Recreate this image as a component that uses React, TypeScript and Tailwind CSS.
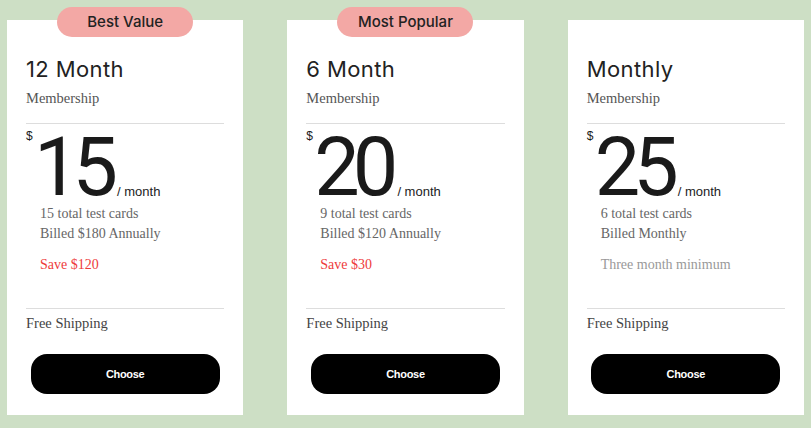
import React from "react";

type Plan = {
  badge?: string;
  title: string;
  price: string;
  cards: string;
  billed: string;
  note: string;
  noteRed: boolean;
};

const plans: Plan[] = [
  { badge: "Best Value", title: "12 Month", price: "15", cards: "15 total test cards", billed: "Billed $180 Annually", note: "Save $120", noteRed: true },
  { badge: "Most Popular", title: "6 Month", price: "20", cards: "9 total test cards", billed: "Billed $120 Annually", note: "Save $30", noteRed: true },
  { title: "Monthly", price: "25", cards: "6 total test cards", billed: "Billed Monthly", note: "Three month minimum", noteRed: false },
];

const serif = { fontFamily: "'Liberation Serif', 'Times New Roman', serif" };

function Card({ p }: { p: Plan }) {
  return (
    <div className="relative flex-1 h-[395px] bg-white px-[19px] pt-[35px] pb-[21px] flex flex-col">
      {p.badge && (
        <div className="absolute left-1/2 -translate-x-1/2 top-[-13px] w-[136px] h-[30px] rounded-full bg-[#f3a8a5] flex items-center justify-center text-[15px] font-medium text-[#222] font-[Inter,sans-serif]">
          {p.badge}
        </div>
      )}
      <div className="text-[22px] leading-[28px] text-[#222] tracking-[0.4px] font-[Inter,sans-serif]">{p.title}</div>
      <div className="mt-[5px] text-[14.5px] leading-[20px] text-[#555]" style={serif}>Membership</div>
      <div className="mt-[15px] h-px bg-[#dddddd]" />
      <div className="mt-[8px] flex items-baseline text-[#1a1a1a] font-['Liberation_Sans',Arial,sans-serif]">
        <span className="self-start mt-[-2px] text-[12px] leading-none w-[6px]">$</span>
        <span className="ml-[2px] text-[81px] leading-[72px] tracking-[-7px] font-normal font-[Roboto,sans-serif]">{p.price}</span>
        <span className="ml-[6px] text-[13px] text-[#222] translate-y-[1px]">/ month</span>
      </div>
      <div className="ml-[14px] text-[14px] leading-[20px] text-[#666]" style={serif}>
        <div>{p.cards}</div>
        <div>{p.billed}</div>
        <div className={"mt-[11px] " + (p.noteRed ? "text-[#ee3b3b]" : "text-[#999]")}>{p.note}</div>
      </div>
      <div className="mt-[33px] h-px bg-[#dddddd]" />
      <div className="mt-[4px] text-[14.5px] leading-[20px] text-[#444]" style={serif}>Free Shipping</div>
      <button className="mt-[21px] mx-auto w-[189px] h-[40px] rounded-[16px] bg-black text-white text-[11px] font-bold tracking-[-0.3px] font-['Liberation_Sans',Arial,sans-serif]">
        Choose
      </button>
    </div>
  );
}

export default function App() {
  return (
    <div className="w-[811px] h-[428px] bg-[#cddfc5] flex gap-[44px] px-[7px] pt-[20px] overflow-hidden">
      {plans.map((p) => (
        <Card key={p.title} p={p} />
      ))}
    </div>
  );
}
